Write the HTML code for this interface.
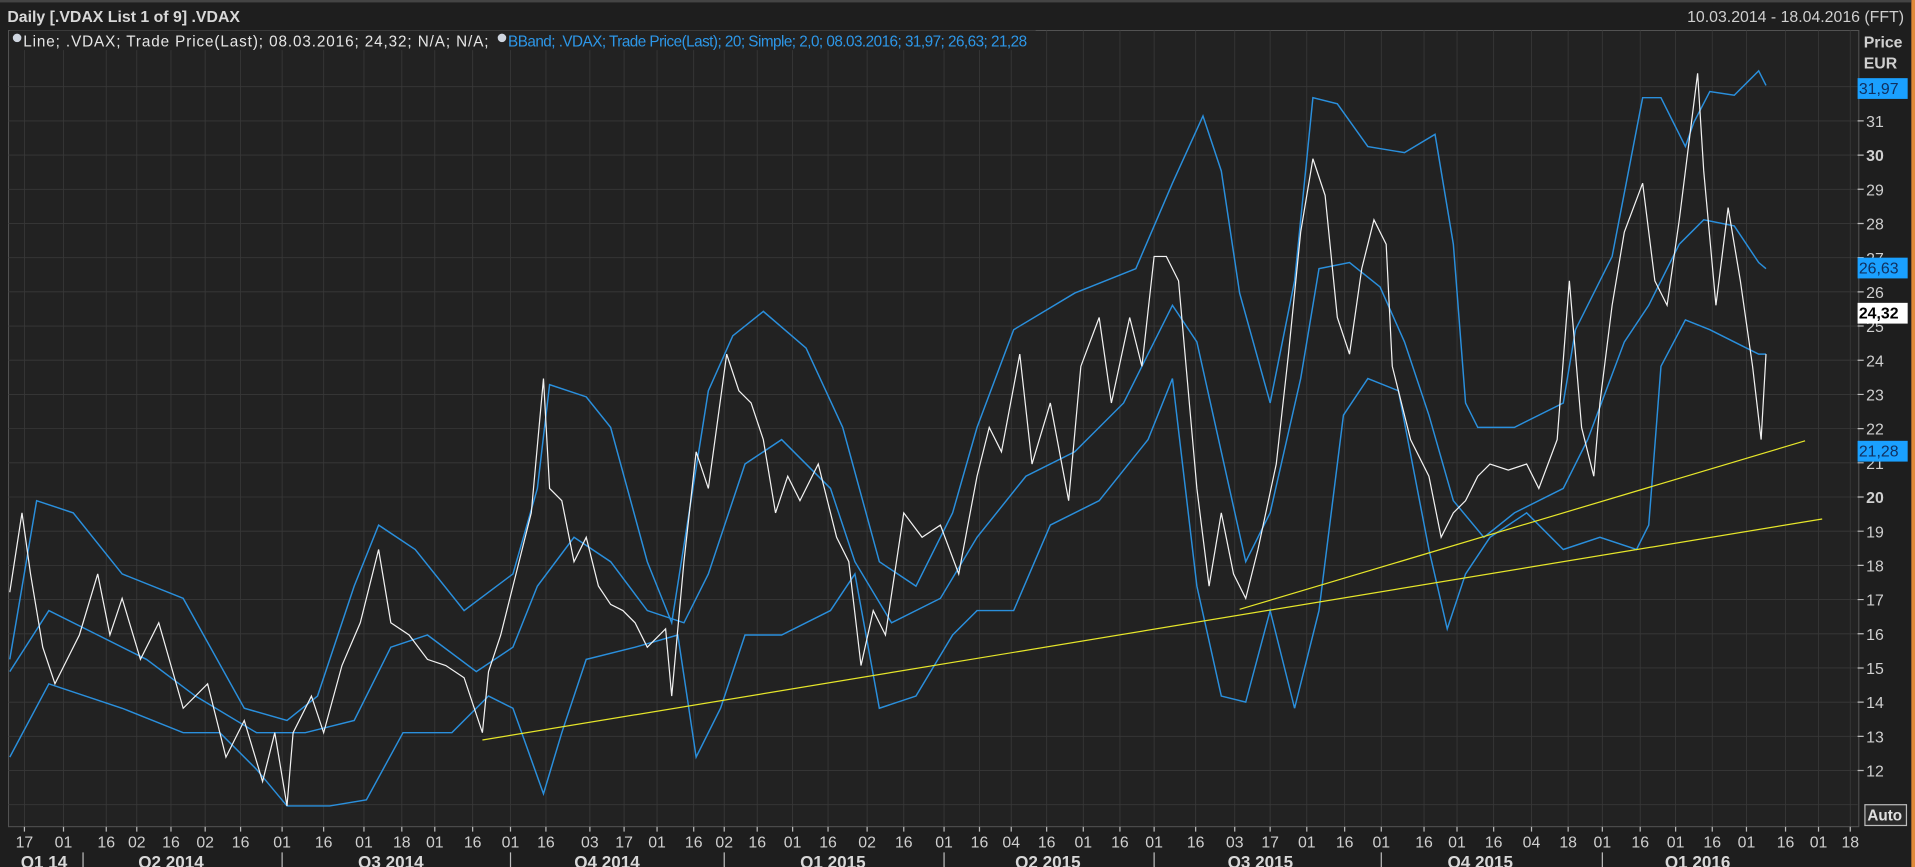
<!DOCTYPE html>
<html><head><meta charset="utf-8"><style>
html,body{margin:0;padding:0;background:#1d1d1d;overflow:hidden}
svg{display:block}
text{font-family:"Liberation Sans",sans-serif}
</style></head><body>
<svg width="1915" height="867" viewBox="0 0 1568 710" preserveAspectRatio="none" xmlns="http://www.w3.org/2000/svg">
<rect x="0" y="0" width="1568" height="710" fill="#1e1e1e"/>
<rect x="1565" y="0" width="3" height="710" fill="#e08a3a"/>
<rect x="0" y="0" width="1565" height="2" fill="#444"/>
<text x="6" y="18" fill="#d8d8d8" font-size="13" font-weight="bold">Daily [.VDAX List 1 of 9] .VDAX</text>
<text x="1559" y="18" fill="#cfcfcf" font-size="13" text-anchor="end">10.03.2014 - 18.04.2016 (FFT)</text>
<rect x="7" y="25" width="1515" height="652" fill="#222" stroke="#555" stroke-width="0.8"/>
<g stroke="#383838" stroke-width="0.7">
<line x1="7" y1="71" x2="1521" y2="71"/><line x1="7" y1="99" x2="1521" y2="99"/><line x1="7" y1="127" x2="1521" y2="127"/><line x1="7" y1="155" x2="1521" y2="155"/><line x1="7" y1="183" x2="1521" y2="183"/><line x1="7" y1="211" x2="1521" y2="211"/><line x1="7" y1="239" x2="1521" y2="239"/><line x1="7" y1="267" x2="1521" y2="267"/><line x1="7" y1="295" x2="1521" y2="295"/><line x1="7" y1="323" x2="1521" y2="323"/><line x1="7" y1="351" x2="1521" y2="351"/><line x1="7" y1="379" x2="1521" y2="379"/><line x1="7" y1="407" x2="1521" y2="407"/><line x1="7" y1="435" x2="1521" y2="435"/><line x1="7" y1="463" x2="1521" y2="463"/><line x1="7" y1="491" x2="1521" y2="491"/><line x1="7" y1="519" x2="1521" y2="519"/><line x1="7" y1="547" x2="1521" y2="547"/><line x1="7" y1="575" x2="1521" y2="575"/><line x1="7" y1="603" x2="1521" y2="603"/><line x1="7" y1="631" x2="1521" y2="631"/><line x1="7" y1="659" x2="1521" y2="659"/>
<path d="M20 25V677M52 25V677M87 25V677M112 25V677M140 25V677M168 25V677M197 25V677M231 25V677M265 25V677M298 25V677M329 25V677M356 25V677M387 25V677M418 25V677M447 25V677M483 25V677M511 25V677M538 25V677M568 25V677M593 25V677M620 25V677M649 25V677M678 25V677M710 25V677M740 25V677M773 25V677M802 25V677M828 25V677M857 25V677M887 25V677M917 25V677M945 25V677M979 25V677M1011 25V677M1040 25V677M1070 25V677M1101 25V677M1131 25V677M1166 25V677M1193 25V677M1223 25V677M1254 25V677M1284 25V677M1312 25V677M1343 25V677M1372 25V677M1402 25V677M1430 25V677M1462 25V677M1489 25V677M1515 25V677"/>
</g>
<rect x="8" y="25" width="840" height="16" fill="#222"/>
<circle cx="14" cy="31" r="3.5" fill="#cfd6e0"/>
<text x="19" y="38" fill="#e6e6e6" font-size="12.5" textLength="381">Line; .VDAX; Trade Price(Last); 08.03.2016; 24,32; N/A; N/A;</text>
<circle cx="411" cy="31" r="3.5" fill="#cfd6e0"/>
<text x="416" y="38" fill="#2d97e8" font-size="12.5" textLength="425">BBand; .VDAX; Trade Price(Last);  20; Simple; 2,0; 08.03.2016; 31,97; 26,63; 21,28</text>
<g fill="none" stroke="#2a8fdc" stroke-width="1.2">
<polyline points="8,540 30,410 60,420 100,470 150,490 200,580 235,590 260,570 290,480 310,430 340,450 380,500 420,470 440,400 450,315 480,325 500,350 530,460 550,510 580,320 600,275 625,255 660,285 690,350 720,460 750,480 780,420 800,350 830,270 880,240 930,220 960,150 985,95 1000,140 1015,240 1040,330 1060,230 1075,80 1095,85 1120,120 1150,125 1175,110 1190,200 1200,330 1210,350 1240,350 1280,330 1290,270 1320,210 1345,80 1360,80 1370,100 1380,120 1387,100 1400,75 1420,78 1440,58 1446,70"/>
<polyline points="8,550 40,500 80,520 120,540 160,570 210,600 250,600 290,590 320,530 350,520 390,550 420,530 440,480 470,440 500,460 530,500 560,510 580,470 610,380 640,360 680,400 700,460 730,510 770,490 800,440 840,390 880,370 920,330 960,250 980,280 1000,370 1020,460 1040,420 1065,310 1080,220 1105,215 1130,235 1150,280 1170,340 1190,410 1215,440 1240,420 1280,400 1300,360 1330,280 1350,250 1375,200 1395,180 1420,185 1440,215 1446,220"/>
<polyline points="8,620 40,560 100,580 150,600 180,600 210,630 235,660 270,660 300,655 330,600 370,600 400,570 420,580 445,650 460,600 480,540 520,530 555,520 570,620 590,580 610,520 640,520 680,500 700,470 720,580 750,570 780,520 800,500 830,500 860,430 900,410 940,360 960,310 980,480 1000,570 1020,575 1040,500 1060,580 1080,500 1100,340 1120,310 1145,320 1170,450 1185,515 1200,470 1220,440 1250,420 1280,450 1310,440 1340,450 1350,430 1360,300 1380,262 1400,270 1420,280 1440,290 1446,290"/>
</g>
<polyline fill="none" stroke="#f2f2f2" stroke-width="1" points="8,485 18,420 25,470 35,530 45,560 55,540 65,520 80,470 90,520 100,490 115,540 130,510 150,580 170,560 185,620 200,590 215,640 225,600 235,660 240,600 255,570 265,600 280,545 295,510 310,450 320,510 335,520 350,540 365,545 380,555 395,600 400,550 410,520 420,480 435,420 445,310 450,400 460,410 470,460 480,440 490,480 500,495 510,500 520,510 530,530 545,515 550,570 560,460 570,370 580,400 595,290 605,320 615,330 625,360 635,420 645,390 655,410 670,380 685,440 695,460 705,545 715,500 725,520 740,420 755,440 770,430 785,470 800,390 810,350 820,370 835,290 845,380 860,330 875,410 885,300 900,260 910,330 925,260 935,300 945,210 955,210 965,230 980,400 990,480 1000,420 1010,470 1020,490 1030,450 1045,380 1055,290 1065,190 1075,130 1085,160 1095,260 1105,290 1115,220 1125,180 1135,200 1140,300 1155,360 1170,390 1180,440 1190,420 1200,410 1210,390 1220,380 1235,385 1250,380 1260,400 1275,360 1285,230 1295,350 1305,390 1310,330 1320,250 1330,190 1345,150 1355,230 1365,250 1375,180 1385,100 1390,60 1395,140 1405,250 1415,170 1425,230 1435,300 1442,360 1446,290"/>
<g stroke="#e6e62a" stroke-width="1">
<line x1="395" y1="606" x2="1492" y2="425"/>
<line x1="1015" y1="499" x2="1478" y2="361"/>
</g>
<g fill="#cfcfcf" font-size="13">
<text x="1526" y="39" font-weight="bold">Price</text>
<text x="1526" y="56" font-weight="bold">EUR</text>
<path d="M1521 99h5M1521 127h5M1521 155h5M1521 183h5M1521 211h5M1521 239h5M1521 267h5M1521 295h5M1521 323h5M1521 351h5M1521 379h5M1521 407h5M1521 435h5M1521 463h5M1521 491h5M1521 519h5M1521 547h5M1521 575h5M1521 603h5M1521 631h5" stroke="#bbb"/>
<text x="1528" y="104">31</text><text x="1528" y="132" font-weight="bold">30</text><text x="1528" y="160">29</text><text x="1528" y="188">28</text><text x="1528" y="216">27</text><text x="1528" y="244">26</text><text x="1528" y="272" >25</text><text x="1528" y="300">24</text><text x="1528" y="328">23</text><text x="1528" y="356">22</text><text x="1528" y="384">21</text><text x="1528" y="412" font-weight="bold">20</text><text x="1528" y="440">19</text><text x="1528" y="468">18</text><text x="1528" y="496">17</text><text x="1528" y="524">16</text><text x="1528" y="552">15</text><text x="1528" y="580">14</text><text x="1528" y="608">13</text><text x="1528" y="636">12</text>
</g>
<rect x="1521" y="64" width="41" height="17" fill="#1aa0ff"/><text x="1522" y="77" fill="#103060" font-size="13">31,97</text>
<rect x="1521" y="211" width="41" height="17" fill="#1aa0ff"/><text x="1522" y="224" fill="#103060" font-size="13">26,63</text>
<rect x="1521" y="248" width="41" height="17" fill="#fff"/><text x="1522" y="261" fill="#000" font-size="13" font-weight="bold">24,32</text>
<rect x="1521" y="361" width="41" height="17" fill="#1aa0ff"/><text x="1522" y="374" fill="#103060" font-size="13">21,28</text>
<rect x="1527" y="659" width="34" height="17" fill="#2a2a2a" stroke="#bbb"/><text x="1529" y="672" fill="#e0e0e0" font-size="12.5" font-weight="bold">Auto</text>
<path d="M20 677v4M52 677v4M87 677v4M112 677v4M140 677v4M168 677v4M197 677v4M231 677v4M265 677v4M298 677v4M329 677v4M356 677v4M387 677v4M418 677v4M447 677v4M483 677v4M511 677v4M538 677v4M568 677v4M593 677v4M620 677v4M649 677v4M678 677v4M710 677v4M740 677v4M773 677v4M802 677v4M828 677v4M857 677v4M887 677v4M917 677v4M945 677v4M979 677v4M1011 677v4M1040 677v4M1070 677v4M1101 677v4M1131 677v4M1166 677v4M1193 677v4M1223 677v4M1254 677v4M1284 677v4M1312 677v4M1343 677v4M1372 677v4M1402 677v4M1430 677v4M1462 677v4M1489 677v4M1515 677v4" stroke="#bbb"/>
<g fill="#cfcfcf" font-size="13" text-anchor="middle">
<text x="20" y="694" font-family="Liberation Serif">17</text><text x="52" y="694" font-family="Liberation Serif">01</text><text x="87" y="694" font-family="Liberation Serif">16</text><text x="112" y="694" font-family="Liberation Serif">02</text><text x="140" y="694" font-family="Liberation Serif">16</text><text x="168" y="694" font-family="Liberation Serif">02</text><text x="197" y="694" font-family="Liberation Serif">16</text><text x="231" y="694" font-family="Liberation Serif">01</text><text x="265" y="694" font-family="Liberation Serif">16</text><text x="298" y="694" font-family="Liberation Serif">01</text><text x="329" y="694" font-family="Liberation Serif">18</text><text x="356" y="694" font-family="Liberation Serif">01</text><text x="387" y="694" font-family="Liberation Serif">16</text><text x="418" y="694" font-family="Liberation Serif">01</text><text x="447" y="694" font-family="Liberation Serif">16</text><text x="483" y="694" font-family="Liberation Serif">03</text><text x="511" y="694" font-family="Liberation Serif">17</text><text x="538" y="694" font-family="Liberation Serif">01</text><text x="568" y="694" font-family="Liberation Serif">16</text><text x="593" y="694" font-family="Liberation Serif">02</text><text x="620" y="694" font-family="Liberation Serif">16</text><text x="649" y="694" font-family="Liberation Serif">01</text><text x="678" y="694" font-family="Liberation Serif">16</text><text x="710" y="694" font-family="Liberation Serif">02</text><text x="740" y="694" font-family="Liberation Serif">16</text><text x="773" y="694" font-family="Liberation Serif">01</text><text x="802" y="694" font-family="Liberation Serif">16</text><text x="828" y="694" font-family="Liberation Serif">04</text><text x="857" y="694" font-family="Liberation Serif">16</text><text x="887" y="694" font-family="Liberation Serif">01</text><text x="917" y="694" font-family="Liberation Serif">16</text><text x="945" y="694" font-family="Liberation Serif">01</text><text x="979" y="694" font-family="Liberation Serif">16</text><text x="1011" y="694" font-family="Liberation Serif">03</text><text x="1040" y="694" font-family="Liberation Serif">17</text><text x="1070" y="694" font-family="Liberation Serif">01</text><text x="1101" y="694" font-family="Liberation Serif">16</text><text x="1131" y="694" font-family="Liberation Serif">01</text><text x="1166" y="694" font-family="Liberation Serif">16</text><text x="1193" y="694" font-family="Liberation Serif">01</text><text x="1223" y="694" font-family="Liberation Serif">16</text><text x="1254" y="694" font-family="Liberation Serif">04</text><text x="1284" y="694" font-family="Liberation Serif">18</text><text x="1312" y="694" font-family="Liberation Serif">01</text><text x="1343" y="694" font-family="Liberation Serif">16</text><text x="1372" y="694" font-family="Liberation Serif">01</text><text x="1402" y="694" font-family="Liberation Serif">16</text><text x="1430" y="694" font-family="Liberation Serif">01</text><text x="1462" y="694" font-family="Liberation Serif">16</text><text x="1489" y="694" font-family="Liberation Serif">01</text><text x="1515" y="694" font-family="Liberation Serif">18</text>
</g>
<path d="M68 698v12M231 698v12M418 698v12M593 698v12M773 698v12M945 698v12M1131 698v12M1312 698v12" stroke="#bbb"/>
<g fill="#d8d8d8" font-size="14" font-weight="bold" text-anchor="middle">
<text x="36" y="711">Q1 14</text><text x="140" y="711">Q2 2014</text><text x="320" y="711">Q3 2014</text><text x="497" y="711">Q4 2014</text><text x="682" y="711">Q1 2015</text><text x="858" y="711">Q2 2015</text><text x="1032" y="711">Q3 2015</text><text x="1212" y="711">Q4 2015</text><text x="1390" y="711">Q1 2016</text>
</g>
</svg>
</body></html>
